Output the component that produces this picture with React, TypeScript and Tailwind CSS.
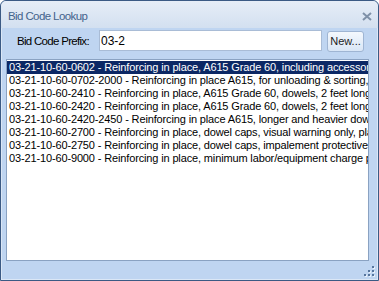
import React from "react";

const rows = [
  "03-21-10-60-0602 - Reinforcing in place, A615 Grade 60, including accessories",
  "03-21-10-60-0702-2000 - Reinforcing in place A615, for unloading & sorting, add",
  "03-21-10-60-2410 - Reinforcing in place, A615 Grade 60, dowels, 2 feet long",
  "03-21-10-60-2420 - Reinforcing in place, A615 Grade 60, dowels, 2 feet long",
  "03-21-10-60-2420-2450 - Reinforcing in place A615, longer and heavier dowels",
  "03-21-10-60-2700 - Reinforcing in place, dowel caps, visual warning only, plastic",
  "03-21-10-60-2750 - Reinforcing in place, dowel caps, impalement protective",
  "03-21-10-60-9000 - Reinforcing in place, minimum labor/equipment charge per",
];

export default function App() {
  return (
    <div
      className="relative w-[379px] h-[281px] flex flex-col border border-[#3b5a84] rounded-t-[6px] bg-[#bfd5f1] overflow-hidden shadow-[inset_1px_0_0_#dbe7f6,inset_-1px_0_0_#dbe7f6,inset_0_-1px_0_#dbe7f6]"
      style={{ fontFamily: '"Liberation Sans", Arial, sans-serif' }}
    >
      {/* Title bar */}
      <div className="h-[27px] shrink-0 flex items-start justify-between pl-[7px] pr-[6px] pt-[9px] bg-gradient-to-b from-[#e6edf7] to-[#d3e0f0] rounded-t-[5px]">
        <span className="text-[11.5px] leading-[13px] text-[#44638c] tracking-[-0.6px]">
          Bid Code Lookup
        </span>
        <svg width="10" height="9" viewBox="0 0 10 9" className="mt-[2px]">
          <path d="M1 1 L9 8 M9 1 L1 8" stroke="#7f91a8" strokeWidth="2" />
        </svg>
      </div>

      {/* Prefix row */}
      <div className="mt-[2px] h-[22px] shrink-0 flex items-start pl-[16px]">
        <div className="w-[82px] h-[22px] flex items-center text-[11.5px] leading-[13px] text-black tracking-[-0.7px] pt-[1px]">
          Bid Code Prefix:
        </div>
        <div className="w-[223px] h-[21px] border border-[#a9bcd6] bg-white flex items-center pl-[1px] text-[12px] leading-[14px] text-black">
          03-2
        </div>
        <div className="ml-[5px] mt-[1px] w-[37px] h-[21px] border border-[#9fb5d3] rounded-[3px] bg-gradient-to-b from-[#f4f8fd] to-[#d9e6f6] flex items-center justify-center text-[11px] leading-[13px] text-[#1c1c1c]">
          New...
        </div>
      </div>

      {/* List */}
      <div className="mt-[7px] ml-[5px] w-[363px] h-[202px] shrink-0 border border-[#8aa2c2] bg-white overflow-hidden pt-[1px]">
        {rows.map((r, i) => (
          <div
            key={i}
            className={
              "h-[13px] leading-[13px] text-[11px] tracking-[-0.14px] pl-[2px] whitespace-nowrap overflow-hidden " +
              (i === 0 ? "bg-[#0c2865] text-white" : "text-black")
            }
          >
            {r}
          </div>
        ))}
      </div>

      {/* Resize grip */}
      <svg
        width="12"
        height="12"
        viewBox="0 0 12 12"
        className="absolute right-[2px] bottom-[2px]"
      >
        {[
          [8, 0],
          [4, 4],
          [8, 4],
          [0, 8],
          [4, 8],
          [8, 8],
        ].map(([x, y], i) => (
          <g key={i}>
            <rect x={x + 1} y={y + 1} width="2" height="2" fill="#e8f0fa" />
            <rect x={x} y={y} width="2" height="2" fill="#56759e" />
          </g>
        ))}
      </svg>
    </div>
  );
}
